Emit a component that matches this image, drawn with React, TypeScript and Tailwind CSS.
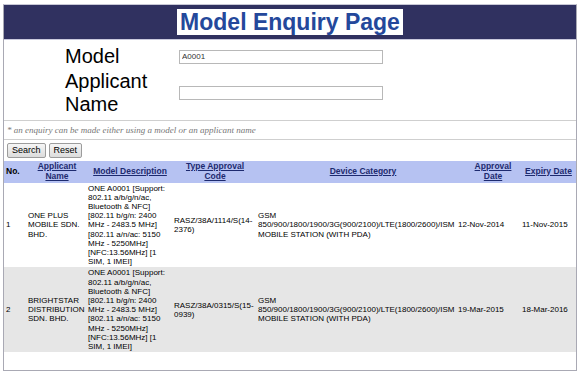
import React from "react";

interface ApprovalRow {
  no: number;
  applicant: string;
  model: string;
  code: string;
  category: string[];
  approved: string;
  expires: string;
}

const MODEL_TEXT =
  "ONE A0001 [Support: 802.11 a/b/g/n/ac, Bluetooth & NFC] [802.11 b/g/n: 2400 MHz - 2483.5 MHz] [802.11 a/n/ac: 5150 MHz - 5250MHz] [NFC:13.56MHz] [1 SIM, 1 IMEI]";

const CATEGORY = [
  "GSM",
  "850/900/1800/1900/3G(900/2100)/LTE(1800/2600)/ISM",
  "MOBILE STATION (WITH PDA)",
];

const rows: ApprovalRow[] = [
  {
    no: 1,
    applicant: "ONE PLUS MOBILE SDN. BHD.",
    model: MODEL_TEXT,
    code: "RASZ/38A/1114/S(14-2376)",
    category: CATEGORY,
    approved: "12-Nov-2014",
    expires: "11-Nov-2015",
  },
  {
    no: 2,
    applicant: "BRIGHTSTAR DISTRIBUTION SDN. BHD.",
    model: MODEL_TEXT,
    code: "RASZ/38A/0315/S(15-0939)",
    category: CATEGORY,
    approved: "19-Mar-2015",
    expires: "18-Mar-2016",
  },
];

const App: React.FC = () => {
  return (
    <div className="min-h-[376px] bg-white pt-[4px] pl-[3px] font-['Liberation_Sans',Arial,sans-serif]">
      <div className="w-[574px] border border-[#a9a9b4] border-t-[#c8c8d6] pb-[18px]">
        {/* title band */}
        <div className="flex h-[35px] items-center justify-center border-b border-[#c9c9dd] bg-[#303160]">
          <span className="bg-white px-[3px] text-[23px] font-bold leading-[26px] text-[#24489b]">
            Model Enquiry Page
          </span>
        </div>

        {/* search form */}
        <div className="pl-[61px] pt-[4px] pb-[3px] text-black">
          <div className="flex items-center py-[1px]">
            <label className="w-[114px] text-[20px] leading-[23px]">Model</label>
            <input
              type="text"
              defaultValue="A0001"
              className="h-[14px] w-[204px] border border-[#b8b8b8] bg-white px-[2px] text-[8px] text-[#333] outline-none"
            />
          </div>
          <div className="flex items-center py-[1px]">
            <label className="w-[114px] pr-[20px] text-[20px] leading-[23px]">
              Applicant Name
            </label>
            <input
              type="text"
              className="h-[14px] w-[204px] border border-[#b8b8b8] bg-white px-[2px] text-[8px] outline-none"
            />
          </div>
        </div>

        <div className="border-y border-[#cfcfcf] py-[4px] pl-[3px] font-['Liberation_Serif',serif] text-[9px] italic leading-[10px] text-[#777]">
          * an enquiry can be made either using a model or an applicant name
        </div>

        <div className="flex gap-[3px] pt-[3px] pb-[3px] pl-[3px]">
          <button className="h-[15px] rounded-[2px] border border-[#9c9c9c] bg-linear-to-b from-[#f6f6f6] to-[#dcdcdc] px-[4px] text-[9px] leading-none text-black">
            Search
          </button>
          <button className="h-[15px] rounded-[2px] border border-[#9c9c9c] bg-linear-to-b from-[#f6f6f6] to-[#dcdcdc] px-[4px] text-[9px] leading-none text-black">
            Reset
          </button>
        </div>

        {/* results */}
        <table className="w-full table-fixed border-collapse text-[8px] text-black">
          <colgroup>
            <col className="w-[23px]" />
            <col className="w-[60px]" />
            <col className="w-[86px]" />
            <col className="w-[84px]" />
            <col className="w-[200px]" />
            <col className="w-[62px]" />
            <col className="w-[57px]" />
          </colgroup>
          <thead>
            <tr className="bg-[#b6c2f2] text-[8.5px] font-bold leading-[9.8px]">
              <th className="py-[1px] pl-[2px] text-left align-middle">No.</th>
              <th className="py-[1px] text-center align-middle text-[#1d2a6f] underline">
                Applicant
                <br />
                Name
              </th>
              <th className="py-[1px] text-center align-middle text-[#1d2a6f] underline">
                Model Description
              </th>
              <th className="py-[1px] text-center align-middle text-[#1d2a6f] underline">
                Type Approval
                <br />
                Code
              </th>
              <th className="py-[1px] pl-[12px] text-center align-middle text-[#1d2a6f] underline">
                Device Category
              </th>
              <th className="py-[1px] pl-[10px] text-center align-middle text-[#1d2a6f] underline">
                Approval
                <br />
                Date
              </th>
              <th className="py-[1px] pl-[2px] text-center align-middle text-[#1d2a6f] underline">
                Expiry Date
              </th>
            </tr>
          </thead>
          <tbody>
            {rows.map((row) => (
              <tr
                key={row.no}
                className={`leading-[9.2px] ${row.no % 2 === 0 ? "bg-[#e6e6e6]" : "bg-white"}`}
              >
                <td className="py-[1px] pl-[2px] align-middle">{row.no}</td>
                <td className="py-[1px] pl-[1px] align-middle">{row.applicant}</td>
                <td className="py-[1px] pl-[1px] align-middle">{row.model}</td>
                <td className="py-[1px] pl-[1px] align-middle">{row.code}</td>
                <td className="py-[1px] pl-[1px] align-middle">
                  {row.category.map((line) => (
                    <div key={line}>{line}</div>
                  ))}
                </td>
                <td className="py-[1px] pl-[1px] align-middle">{row.approved}</td>
                <td className="py-[1px] pl-[3px] align-middle">{row.expires}</td>
              </tr>
            ))}
          </tbody>
        </table>
      </div>
    </div>
  );
};

export default App;
